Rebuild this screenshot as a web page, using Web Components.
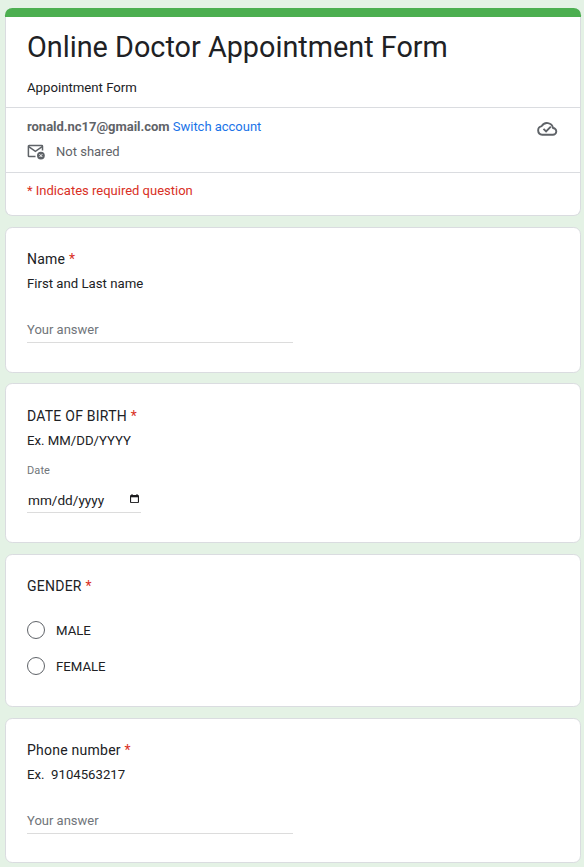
<!DOCTYPE html>
<html lang="en">
<head>
<meta charset="utf-8">
<title>Online Doctor Appointment Form</title>
<style>
html, body { margin: 0; background: #e4f2e5; }
body { height: 867px; overflow: hidden; font-family: Roboto, "Liberation Sans", sans-serif; color: #202124; }
</style>
</head>
<body>
<appointment-form></appointment-form>
<script>
const define = (name, html) => customElements.define(name, class extends HTMLElement {
  constructor() {
    super();
    const t = document.createElement('template');
    t.innerHTML = html;
    this.attachShadow({ mode: 'open' }).appendChild(t.content.cloneNode(true));
  }
});

define('mail-off-icon', `
<style>:host{display:block;width:18px;height:18px} svg{display:block}</style>
<svg width="18" height="18" viewBox="0 0.7 18 18" fill="none" stroke="#5f6368">
  <path d="M8.5 14.3H2.1Q1.4 14.3 1.4 13.6V4Q1.4 3.3 2.1 3.3H14.8Q15.5 3.3 15.5 4V8.3" stroke-width="1.5"/>
  <path d="M1.7 4.4L8.4 9L15.2 4.4" stroke-width="1.5"/>
  <circle cx="13.9" cy="13.3" r="3.9" fill="#5f6368" stroke="none"/>
  <path d="M12.5 11.9l2.8 2.8M15.3 11.9l-2.8 2.8" stroke="#fff" stroke-width="1"/>
</svg>`);

define('cloud-done-icon', `
<style>:host{display:block;width:21px;height:22px} svg{display:block}</style>
<svg width="21" height="22" viewBox="0 0 21 22" fill="none" stroke="#5f6368" stroke-width="1.9">
  <path d="M5.2 17.8H15.8A3.4 3.4 0 0 0 16 11A6.1 6.1 0 0 0 4.7 9.1A4.4 4.4 0 0 0 5.2 17.8Z" stroke-linejoin="round"/>
  <path d="M6.5 11.8l2.6 2.6l4.7-4.7"/>
</svg>`);

define('calendar-icon', `
<style>:host{display:block;width:9px;height:10px} svg{display:block}</style>
<svg width="9" height="10" viewBox="0 0 9 10">
  <path d="M1.5 0h1v1h4V0h1v1H8q1 0 1 1v6q0 1-1 1H1Q0 9 0 8V2q0-1 1-1h.5z" fill="#1c1c1e"/>
  <path d="M1.1 3.3h6.8v4.8H1.1z" fill="#fff"/>
</svg>`);

define('text-answer', `
<style>
:host{display:block;box-sizing:border-box;width:266px;height:24px;margin-top:26px;border-bottom:1px solid #dcdcdc;
 font-size:13px;line-height:22px;color:#70757a}
</style><slot>Your answer</slot>`);

define('date-answer', `
<style>
:host{display:block}
.label{margin-top:14px;font-size:11px;line-height:14px;letter-spacing:.1px;color:#70757a}
.field{display:flex;align-items:center;box-sizing:border-box;width:114px;height:24px;margin-top:11px;padding:0 2px 0 1px;
 border-bottom:1px solid #dcdcdc;font-size:13.6px;justify-content:space-between}
.value{margin-bottom:2px}
calendar-icon{margin-bottom:3px}
</style>
<div class="label">Date</div>
<div class="field"><span class="value">mm/dd/yyyy</span><calendar-icon></calendar-icon></div>`);

define('radio-option', `
<style>
:host{display:flex;align-items:center;gap:11px;height:18px;margin-bottom:18px;font-size:13.2px}
.ring{box-sizing:border-box;width:18px;height:18px;border:1.4px solid #5f6368;border-radius:50%}
</style><span class="ring"></span><span><slot></slot></span>`);

define('question-card', `
<style>
:host{display:block;box-sizing:border-box;height:var(--h);margin-top:var(--gap,11px);padding:var(--top,21px) 21px 0;
 background:#fff;border:1px solid #dadce0;border-radius:7.2px}
.title{font-size:14px;line-height:20px;letter-spacing:.24px}
.star{color:#d93025}
.help{font-size:13.2px;line-height:18px;margin-top:6px;white-space:pre}
</style>
<div class="title"><slot name="title"></slot> <span class="star">*</span></div>
<div class="help"><slot name="help"></slot></div>
<slot></slot>`);

define('form-header', `
<style>
:host{display:block;box-sizing:border-box;height:208px;background:#fff;border:1px solid #dadce0;border-top:0;
 border-radius:7.2px}
.bar{height:9px;margin:0 -1px;background:#4caf50;border-radius:7.2px 7.2px 0 0}
h1{margin:0;padding:11px 21px 0;font-size:28.8px;line-height:38px;font-weight:400}
.desc{padding:13px 21px 0;height:17px;font-size:13.2px;line-height:18px;margin-bottom:11px}
.account{box-sizing:border-box;height:66px;border:solid #dadce0;border-width:1px 0;padding:9px 22px 0 21px;
 display:flex;justify-content:space-between;font-size:13px;line-height:20px;color:#5f6368}
.mail{font-weight:700;letter-spacing:-.02px}
.switch{color:#1a73e8;letter-spacing:-.02px}
.shared{display:flex;gap:11px;margin-top:5px;align-items:center}
.note{padding:8px 21px;font-size:13px;line-height:20px;color:#d93025}
</style>
<div class="bar"></div>
<h1>Online Doctor Appointment Form</h1>
<div class="desc">Appointment Form</div>
<div class="account">
  <div>
    <div><span class="mail">ronald.nc17@gmail.com</span> <span class="switch">Switch account</span></div>
    <div class="shared"><mail-off-icon></mail-off-icon><span>Not shared</span></div>
  </div>
  <cloud-done-icon></cloud-done-icon>
</div>
<div class="note">* Indicates required question</div>`);

define('appointment-form', `
<style>
:host{display:block;box-sizing:border-box;width:581px;padding:8px 0 0 5px}
</style>
<form-header></form-header>
<question-card style="--h:146px">
  <span slot="title">Name</span><span slot="help">First and Last name</span>
  <text-answer></text-answer>
</question-card>
<question-card style="--h:160px;--gap:10px;--top:22px">
  <span slot="title">DATE OF BIRTH</span><span slot="help">Ex. MM/DD/YYYY</span>
  <date-answer></date-answer>
</question-card>
<question-card style="--h:153px">
  <span slot="title">GENDER</span>
  <radio-option style="margin-top:25px">MALE</radio-option>
  <radio-option>FEMALE</radio-option>
</question-card>
<question-card style="--h:145px">
  <span slot="title">Phone number</span><span slot="help">Ex.  9104563217</span>
  <text-answer></text-answer>
</question-card>`);
</script>
</body>
</html>
